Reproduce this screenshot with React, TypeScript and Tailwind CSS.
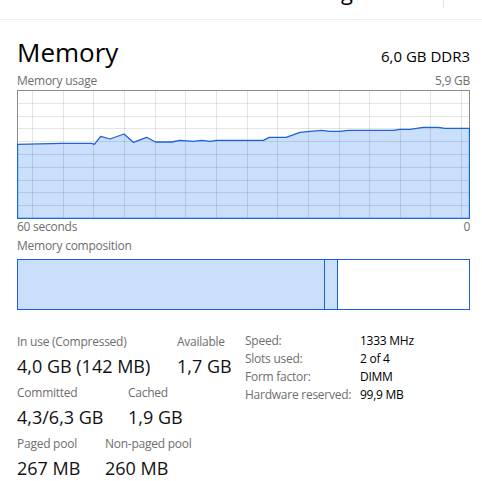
const usage: [number, number][] = [
  [0, 54.3], [44.7, 53.3], [74.7, 53.3], [77.3, 54.3], [83.7, 46.3], [93, 49], [107, 44],
  [116.3, 52.3], [129.7, 47.3], [138.3, 52], [154.7, 52], [163, 50.3], [176.3, 51.3],
  [184.7, 50.3], [193, 51.3], [199.7, 50.3], [246.3, 50.3], [252.3, 47.3], [269, 47.3],
  [283, 42.3], [293, 41.3], [304.7, 40.3], [313, 41.3], [323, 41.3], [331.3, 40.3],
  [376.3, 40.3], [383, 39.3], [393, 39.3], [406.3, 37.3], [421.3, 37.3], [428, 38.3], [453, 38.3],
]

const W = 453
const H = 129

const UsageChart = () => {
  const line = usage.map(([x, y]) => `${Math.min(Math.max(x, 0.5), W - 0.5)},${y}`).join(' ')
  const area = `0.5,${H - 0.5} ${line} ${W - 0.5},${H - 0.5}`
  const cols = Array.from({ length: 15 }, (_, i) => Math.round(15 + i * 30.65) + 0.5)
  const rows = Array.from({ length: 9 }, (_, i) => Math.round((i + 1) * 12.8) + 0.5)

  return (
    <svg width={W} height={H} viewBox={`0 0 ${W} ${H}`} className="block">
      <polygon points={area} fill="#c9dffb" />
      {cols.map((x) => (
        <line key={x} x1={x} y1={0} x2={x} y2={H} stroke="rgba(0,0,0,0.1)" />
      ))}
      {rows.map((y) => (
        <line key={y} x1={0} y1={y} x2={W} y2={y} stroke="rgba(0,0,0,0.1)" />
      ))}
      <rect x={0.5} y={0.5} width={W - 1} height={H - 1} fill="none" stroke="#8a8a8a" />
      <polygon points={area} fill="none" stroke="#1c63d8" strokeWidth={1.3} strokeLinejoin="round" />
    </svg>
  )
}

type StatProps = {
  label: string
  value: string
  width?: string
}

const Stat = ({ label, value, width }: StatProps) => (
  <div className={width}>
    <div className="h-[16px] whitespace-nowrap text-[12px] leading-[16px] tracking-[-0.25px] text-[#6e6e6e]">
      {label}
    </div>
    <div className="mt-[4px] h-[24px] whitespace-nowrap text-[18px] leading-[24px] text-[#111]">{value}</div>
  </div>
)

const details = [
  ['Speed:', '1333 MHz'],
  ['Slots used:', '2 of 4'],
  ['Form factor:', 'DIMM'],
  ['Hardware reserved:', '99,9 MB'],
]

export default function App() {
  return (
    <div className="h-[481px] w-[482px] overflow-hidden bg-white font-['Open_Sans',sans-serif]">
      <div className="flex h-[20px] items-start justify-end overflow-hidden border-b border-[#efefef] pr-[38px]">
        <span className="mr-[90px] mt-[-20px] text-[22px] leading-[22px] text-black">Log</span>
        <div className="h-[8px] w-px bg-[#e3e3e3]" />
      </div>

      <div className="pl-[17px] pr-[12px]">
        <div className="mt-[14px] flex h-[36px] items-baseline justify-between">
          <h1 className="text-[26px] leading-[36px] font-normal text-black">Memory</h1>
          <span className="text-[15px] text-black">6,0 GB DDR3</span>
        </div>

        <div className="mt-[3px] flex h-[16px] justify-between text-[12px] leading-[16px] tracking-[-0.25px] text-[#6e6e6e]">
          <span>Memory usage</span>
          <span>5,9 GB</span>
        </div>

        <div className="mt-[1px]">
          <UsageChart />
        </div>

        <div className="flex h-[16px] justify-between text-[12px] leading-[16px] tracking-[-0.25px] text-[#6e6e6e]">
          <span>60 seconds</span>
          <span>0</span>
        </div>

        <div className="mt-[3px] h-[16px] text-[12px] leading-[16px] tracking-[-0.25px] text-[#6e6e6e]">
          Memory composition
        </div>

        <div className="mt-[5px] flex h-[51px] w-[453px] border border-[#1a5fd8]">
          <div className="w-[307px] flex-none border-r border-[#1a5fd8] bg-[#c9dffb]" />
          <div className="w-[13px] flex-none border-r border-[#1a5fd8] bg-[#c9dffb]" />
          <div className="flex-1 bg-white" />
        </div>

        <div className="mt-[24px] flex">
          <div className="flex w-[228px] flex-none flex-col gap-[7px]">
            <div className="flex">
              <Stat label="In use (Compressed)" value="4,0 GB (142 MB)" width="w-[160px]" />
              <Stat label="Available" value="1,7 GB" />
            </div>
            <div className="flex">
              <Stat label="Committed" value="4,3/6,3 GB" width="w-[111px]" />
              <Stat label="Cached" value="1,9 GB" />
            </div>
            <div className="flex">
              <Stat label="Paged pool" value="267 MB" width="w-[88px]" />
              <Stat label="Non-paged pool" value="260 MB" />
            </div>
          </div>

          <div className="mt-[-2px] grid h-fit grid-cols-[115px_auto] text-[12px] leading-[18px] tracking-[-0.25px]">
            {details.map(([label, value]) => (
              <div key={label} className="contents">
                <span className="whitespace-nowrap text-[#6e6e6e]">{label}</span>
                <span className="whitespace-nowrap text-black">{value}</span>
              </div>
            ))}
          </div>
        </div>
      </div>
    </div>
  )
}
